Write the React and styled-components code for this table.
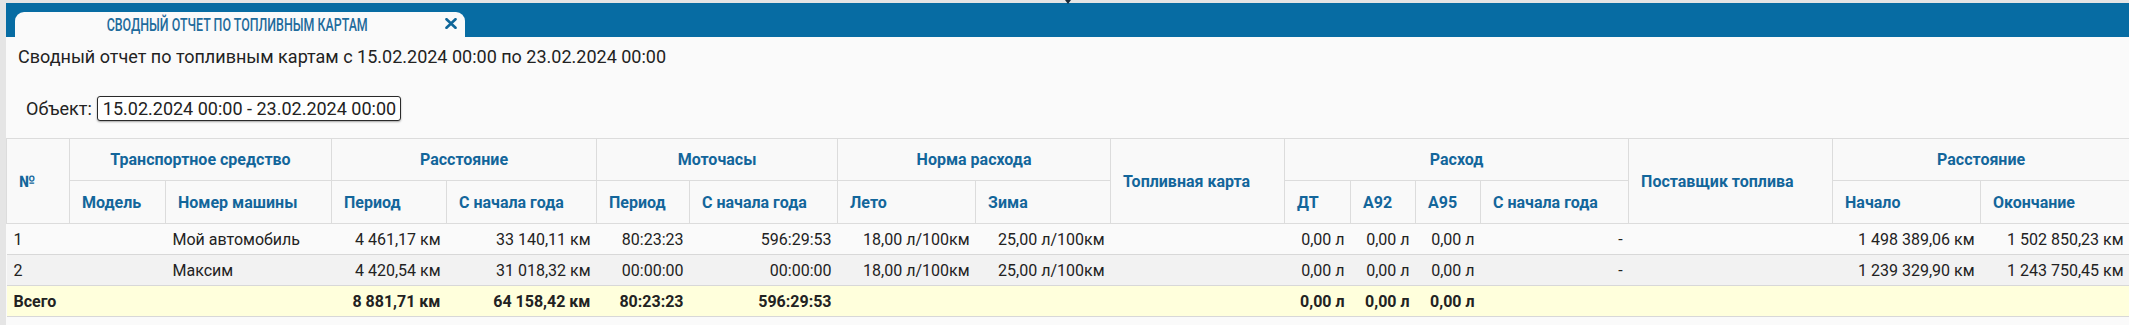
import React from 'react';
import styled, { createGlobalStyle } from 'styled-components';

const Global = createGlobalStyle`
  html, body { margin: 0; padding: 0; background: #e5e5e5; }
  body { font-family: Roboto, "Noto Sans", "Liberation Sans", sans-serif; color: #222; }
  * { box-sizing: border-box; }
`;

const Page = styled.div`
  position: relative;
  width: 2129px;
  height: 325px;
  overflow: hidden;
  padding: 3px 0 0 6px;
  background: #e5e5e5;
`;

const Handle = styled.div`
  position: absolute;
  left: 1065px;
  top: 0;
  width: 6px;
  height: 4px;
  background: #1c2a38;
  clip-path: polygon(0 0, 100% 0, 50% 100%);
`;

const Panel = styled.div`
  display: flex;
  flex-direction: column;
  height: 100%;
`;

const TabBar = styled.div`
  height: 34px;
  background: #076ca3;
  display: flex;
  align-items: flex-end;
  padding-left: 9px;
`;

const Tab = styled.div`
  position: relative;
  width: 450px;
  height: 25px;
  background: #fafafa;
  border-radius: 9px 9px 0 0;
  display: flex;
  align-items: center;
  justify-content: center;
  padding-right: 5px;
`;

const TabTitle = styled.span`
  display: inline-block;
  font-size: 18px;
  font-weight: 500;
  color: #1e6b9c;
  transform: scaleX(0.69);
  white-space: nowrap;
  line-height: 20px;
`;

const Close = styled.button`
  position: absolute;
  right: 8px;
  top: 6px;
  width: 12px;
  height: 11px;
  padding: 0;
  border: 0;
  background: transparent;
  display: flex;
  cursor: pointer;
`;

const Content = styled.div`
  flex: 1;
  background: #fafafa;
`;

const Title = styled.div`
  padding: 9px 0 0 12px;
  font-size: 18px;
  line-height: 21px;
  color: #222;
`;

const FilterRow = styled.div`
  display: flex;
  align-items: center;
  gap: 5px;
  margin: 29px 0 0 20px;
  height: 25px;
  font-size: 18px;
`;

const DateBox = styled.div`
  height: 25px;
  line-height: 23px;
  border: 1px solid #2a2a2a;
  border-radius: 3px;
  padding: 0 4px 0 5px;
  background: #fff;
  box-shadow: 0 1px 2px rgba(0, 0, 0, 0.35);
  font-size: 18px;
  color: #222;
`;

const Table = styled.table`
  margin-top: 17px;
  width: 2123px;
  border-collapse: collapse;
  table-layout: fixed;
`;

const Th = styled.th`
  background: #f9f9f9;
  border: 1px solid #dcdcdc;
  color: #13669b;
  font-size: 16px;
  font-weight: 700;
  text-align: ${(p) => (p.$center ? 'center' : 'left')};
  padding: 0 12px;
  height: ${(p) => p.$h || 42}px;
  vertical-align: middle;
  white-space: nowrap;
`;

const Tr = styled.tr`
  background: ${(p) => (p.$total ? '#ffffdc' : p.$alt ? '#f2f2f2' : '#fafafa')};
`;

const Td = styled.td`
  height: 31px;
  padding: 0 6px 0 7px;
  font-size: 16px;
  font-weight: ${(p) => (p.$bold ? 700 : 400)};
  text-align: ${(p) => (p.$left ? 'left' : 'right')};
  border-top: 1px solid #d8d8d8;
  border-bottom: 1px solid #d8d8d8;
  white-space: nowrap;
  color: #222;
`;

const widths = [63, 96, 166, 115, 150, 93, 148, 138, 135, 174, 66, 65, 65, 148, 204, 148, 149];
const leftCols = [0, 1, 2];

const nb = (s) => s.replace(/ /g, '\u00a0');

const rows = [
  ['1', '', 'Мой автомобиль', '4 461,17 км', '33 140,11 км', '80:23:23', '596:29:53', '18,00 л/100км', '25,00 л/100км', '', '0,00 л', '0,00 л', '0,00 л', '-', '', '1 498 389,06 км', '1 502 850,23 км'],
  ['2', '', 'Максим', '4 420,54 км', '31 018,32 км', '00:00:00', '00:00:00', '18,00 л/100км', '25,00 л/100км', '', '0,00 л', '0,00 л', '0,00 л', '-', '', '1 239 329,90 км', '1 243 750,45 км'],
];
const total = ['Всего', '', '', '8 881,71 км', '64 158,42 км', '80:23:23', '596:29:53', '', '', '', '0,00 л', '0,00 л', '0,00 л', '', '', '', ''];

const CloseIcon = () => (
  <svg width="12" height="11" viewBox="0 0 12 11">
    <path d="M1.5 1.2 L10.5 9.8 M10.5 1.2 L1.5 9.8" stroke="#0f6699" strokeWidth="2.6" strokeLinecap="round" />
  </svg>
);

export default function App() {
  return (
    <>
      <Global />
      <Page>
        <Handle />
        <Panel>
          <TabBar>
            <Tab>
              <TabTitle>СВОДНЫЙ ОТЧЕТ ПО ТОПЛИВНЫМ КАРТАМ</TabTitle>
              <Close aria-label="Закрыть">
                <CloseIcon />
              </Close>
            </Tab>
          </TabBar>
          <Content>
            <Title>Сводный отчет по топливным картам с 15.02.2024 00:00 по 23.02.2024 00:00</Title>
            <FilterRow>
              <span>Объект:</span>
              <DateBox>15.02.2024 00:00 - 23.02.2024 00:00</DateBox>
            </FilterRow>
            <Table>
              <colgroup>
                {widths.map((w, i) => (
                  <col key={i} style={{ width: w }} />
                ))}
              </colgroup>
              <thead>
                <tr>
                  <Th rowSpan={2} $h={42}>№</Th>
                  <Th colSpan={2} $center $h={42}>Транспортное средство</Th>
                  <Th colSpan={2} $center>Расстояние</Th>
                  <Th colSpan={2} $center>Моточасы</Th>
                  <Th colSpan={2} $center>Норма расхода</Th>
                  <Th rowSpan={2}>Топливная карта</Th>
                  <Th colSpan={4} $center>Расход</Th>
                  <Th rowSpan={2}>Поставщик топлива</Th>
                  <Th colSpan={2} $center>Расстояние</Th>
                </tr>
                <tr>
                  <Th $h={43}>Модель</Th>
                  <Th $h={43}>Номер машины</Th>
                  <Th $h={43}>Период</Th>
                  <Th $h={43}>С начала года</Th>
                  <Th $h={43}>Период</Th>
                  <Th $h={43}>С начала года</Th>
                  <Th $h={43}>Лето</Th>
                  <Th $h={43}>Зима</Th>
                  <Th $h={43}>ДТ</Th>
                  <Th $h={43}>А92</Th>
                  <Th $h={43}>А95</Th>
                  <Th $h={43}>С начала года</Th>
                  <Th $h={43}>Начало</Th>
                  <Th $h={43}>Окончание</Th>
                </tr>
              </thead>
              <tbody>
                {rows.map((r, ri) => (
                  <Tr key={ri} $alt={ri % 2 === 1}>
                    {r.map((c, ci) => (
                      <Td key={ci} $left={leftCols.includes(ci)}>{nb(c)}</Td>
                    ))}
                  </Tr>
                ))}
                <Tr $total>
                  {total.map((c, ci) => (
                    <Td key={ci} $bold $left={leftCols.includes(ci)}>{nb(c)}</Td>
                  ))}
                </Tr>
              </tbody>
            </Table>
          </Content>
        </Panel>
      </Page>
    </>
  );
}
